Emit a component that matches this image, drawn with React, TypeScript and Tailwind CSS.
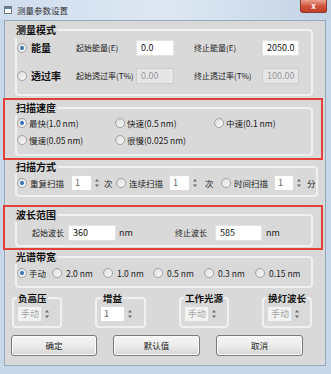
import React from "react";

const Radio = ({ on }: { on?: boolean }) => (
  <span className="inline-flex h-[10px] w-[10px] shrink-0 items-center justify-center rounded-full border border-[#a3a3a3] bg-linear-to-br from-[#dcdcdc] to-[#fbfbfb]">
    {on && <span className="h-[4px] w-[4px] rounded-full bg-[#3572b8]" />}
  </span>
);

const Field = ({ value, w, disabled }: { value: string; w: string; disabled?: boolean }) => (
  <div
    className={`h-[16px] shrink-0 border pl-[4px] text-[9px] leading-[14px] ${w} ${
      disabled ? "border-[#cdcdcd] bg-[#e6e6e6] text-[#9a9a9a]" : "border-[#e2e2e2] bg-white text-[#111]"
    }`}
  >
    {value}
  </div>
);

const Arrows = () => (
  <svg width="8" height="14" viewBox="0 0 8 14" className="shrink-0">
    <path d="M4 3 L6 5.5 L2 5.5 Z" fill="#6a6a6a" />
    <path d="M4 11 L6 8.5 L2 8.5 Z" fill="#6a6a6a" />
  </svg>
);

const Spin = ({ value, w, disabled }: { value: string; w: string; disabled?: boolean }) => (
  <div className="flex h-[16px] shrink-0 items-center gap-[1px]">
    <div
      className={`h-full border border-[#dadada] pl-[3px] text-[9px] leading-[14px] ${w} ${
        disabled ? "bg-[#f3f3f3] text-[#a5a5a5]" : "bg-white text-[#666]"
      }`}
    >
      {value}
    </div>
    <Arrows />
  </div>
);

const Group = ({
  title,
  className = "",
  legend = "leading-[14px]",
  children,
}: {
  title: string;
  className?: string;
  legend?: string;
  children: React.ReactNode;
}) => (
  <fieldset className={`rounded-[4px] border-2 border-[#f0f0f0] ${className}`}>
    <legend className={`ml-[-2px] px-[1px] text-[10px] font-bold text-[#111] ${legend}`}>{title}</legend>
    {children}
  </fieldset>
);

const Opt = ({ on, label, w, gap = "gap-[2px]" }: { on?: boolean; label: string; w: string; gap?: string }) => (
  <div className={`flex shrink-0 items-center ${gap} ${w}`}>
    <Radio on={on} />
    <span className="whitespace-nowrap text-[8.5px] leading-[12px] text-[#222]">{label}</span>
  </div>
);

const Mini = ({ title, value, disabled, w, legendMl }: { title: string; value: string; disabled?: boolean; w: string; legendMl: string }) => (
  <fieldset className={`min-w-0 rounded-[4px] border-2 border-[#f0f0f0] pb-[4px] pl-[3px] ${w}`}>
    <legend className={`${legendMl} whitespace-nowrap px-[1px] text-[9.5px] font-bold leading-[14px] text-[#111]`}>{title}</legend>
    <div className="mt-[1px]">
      <Spin value={value} disabled={disabled} w="w-[25px]" />
    </div>
  </fieldset>
);

const Btn = ({ label, w }: { label: string; w: string }) => (
  <button
    className={`h-[21px] rounded-[3px] border border-[#7b7b7b] bg-linear-to-b from-[#f6f6f6] via-[#ececec] to-[#d6d6d6] text-[8.5px] text-[#222] shadow-[inset_0_0_0_1px_#fbfbfb] ${w}`}
  >
    {label}
  </button>
);

export default function App() {
  return (
    <div className="relative h-[374px] w-[331px] overflow-hidden bg-[#c7d7e8] font-['Noto_Sans_CJK_SC',sans-serif]">
      {/* title bar */}
      <div className="flex h-[20px] items-start bg-linear-to-r from-[#d0dded] via-[#dde8f3] to-[#c3d3e5]">
        <div className="ml-[4px] mt-[6px] h-[8px] w-[8px] border border-[#6d7a88] bg-white">
          <div className="h-[2px] w-full bg-[#5d7fa6]" />
        </div>
        <span className="ml-[5px] mt-[4px] text-[8.5px] leading-[12px] text-[#333]">测量参数设置</span>
        <div className="ml-auto mr-[4px] flex h-[13px] w-[27px] items-center justify-center rounded-b-[3px] border border-t-0 border-[#8a3a2c] bg-linear-to-b from-[#e9a08f] via-[#d0553c] to-[#c23d25] text-[8px] font-bold leading-none text-white">
          x
        </div>
      </div>

      {/* client area */}
      <div className="mx-[4px] h-[346px] w-[322px] border border-[#95a9bd] bg-[#d9d9d9] pl-[10px]">
        <Group title="测量模式" legend="leading-[16px]" className="mt-[1px] w-[298px] pb-[8px]">
          <div className="flex h-[20px] items-center">
            <div className="flex w-[59px] shrink-0 items-center gap-[4px]">
              <Radio on />
              <span className="text-[10px] font-bold leading-[14px] text-[#111]">能量</span>
            </div>
            <span className="w-[60px] shrink-0 text-[8px] leading-[12px] text-[#222]">起始能量(E)</span>
            <Field w="w-[38px]" value="0.0" />
            <span className="ml-[20px] w-[68px] shrink-0 text-[8px] leading-[12px] text-[#222]">终止能量(E)</span>
            <Field w="w-[37px]" value="2050.0" />
          </div>
          <div className="mt-[8px] flex h-[20px] items-center">
            <div className="flex w-[59px] shrink-0 items-center gap-[4px]">
              <Radio />
              <span className="text-[10px] font-bold leading-[14px] text-[#111]">透过率</span>
            </div>
            <span className="w-[60px] shrink-0 whitespace-nowrap text-[8px] leading-[12px] text-[#222]">起始透过率(T%)</span>
            <Field w="w-[38px]" value="0.00" disabled />
            <span className="ml-[20px] w-[68px] shrink-0 whitespace-nowrap text-[8px] leading-[12px] text-[#222]">终止透过率(T%)</span>
            <Field w="w-[37px]" value="100.00" disabled />
          </div>
        </Group>

        <div className="-ml-[12px] mt-[2px] w-[320px] border-2 border-[#e4403b] pb-[2px] pl-[10px] pt-[1px]">
          <Group title="扫描速度" className="w-[298px] pb-[6px]">
            <div className="flex h-[16px] items-center">
              <Opt on label="最快(1.0 nm)" w="w-[98px]" />
              <Opt label="快速(0.5 nm)" w="w-[99px]" />
              <Opt label="中速(0.1 nm)" w="w-[80px]" />
            </div>
            <div className="mt-[1px] flex h-[16px] items-center">
              <Opt label="慢速(0.05 nm)" w="w-[98px]" />
              <Opt label="很慢(0.025 nm)" w="w-[99px]" />
            </div>
          </Group>
        </div>

        <Group title="扫描方式" className="w-[298px] pb-[4px]">
          <div className="mt-[1px] flex h-[16px] items-center">
            <Opt on label="重复扫描" w="w-[54px]" gap="gap-[3px]" />
            <Spin value="1" w="w-[21px]" />
            <span className="w-[15px] shrink-0 pl-[3px] text-[8.5px] leading-[12px] text-[#222]">次</span>
            <Opt label="连续扫描" w="w-[53px]" gap="gap-[3px]" />
            <Spin value="1" w="w-[21px]" />
            <span className="w-[22px] shrink-0 pl-[6px] text-[8.5px] leading-[12px] text-[#222]">次</span>
            <Opt label="时间扫描" w="w-[53px]" gap="gap-[3px]" />
            <Spin value="1" w="w-[20px]" />
            <span className="shrink-0 pl-[4px] text-[8.5px] leading-[12px] text-[#222]">分</span>
          </div>
        </Group>

        <div className="-ml-[12px] mt-[8px] w-[320px] border-2 border-[#e4403b] pb-[1px] pl-[10px] pt-[1px]">
          <Group title="波长范围" className="w-[298px] pb-[4px]">
            <div className="mt-[3px] flex h-[16px] items-center">
              <span className="w-[51px] shrink-0 pl-[15px] text-[8px] leading-[12px] text-[#222]">起始波长</span>
              <Field w="w-[48px]" value="360" />
              <span className="w-[59px] shrink-0 pl-[3px] text-[9px] leading-[12px] text-[#222]">nm</span>
              <span className="w-[40px] shrink-0 text-[8px] leading-[12px] text-[#222]">终止波长</span>
              <Field w="w-[47px]" value="585" />
              <span className="shrink-0 pl-[4px] text-[9px] leading-[12px] text-[#222]">nm</span>
            </div>
          </Group>
        </div>

        <Group title="光谱带宽" className="w-[298px] pb-[6px]">
          <div className="mt-[2px] flex h-[14px] items-center">
            <Opt on label="手动" w="w-[35px]" />
            <Opt label="2.0 nm" w="w-[51px]" gap="gap-[4px]" />
            <Opt label="1.0 nm" w="w-[50px]" gap="gap-[4px]" />
            <Opt label="0.5 nm" w="w-[51px]" gap="gap-[4px]" />
            <Opt label="0.3 nm" w="w-[51px]" gap="gap-[4px]" />
            <Opt label="0.15 nm" w="w-[45px]" gap="gap-[4px]" />
          </div>
        </Group>

        <div className="-ml-[3px] mt-[3px] flex w-[300px] justify-between">
          <Mini title="负高压" value="手动" disabled w="w-[50px]" legendMl="ml-[0px]" />
          <Mini title="增益" value="1" w="w-[51px]" legendMl="ml-[2px]" />
          <Mini title="工作光源" value="手动" disabled w="w-[50px]" legendMl="ml-[0px]" />
          <Mini title="换灯波长" value="手动" disabled w="w-[50px]" legendMl="ml-[0px]" />
        </div>

        <div className="-ml-[4px] mt-[7px] flex gap-[16px]">
          <Btn label="确定" w="w-[86px]" />
          <Btn label="默认值" w="w-[87px]" />
          <Btn label="取消" w="w-[87px]" />
        </div>
      </div>
    </div>
  );
}
